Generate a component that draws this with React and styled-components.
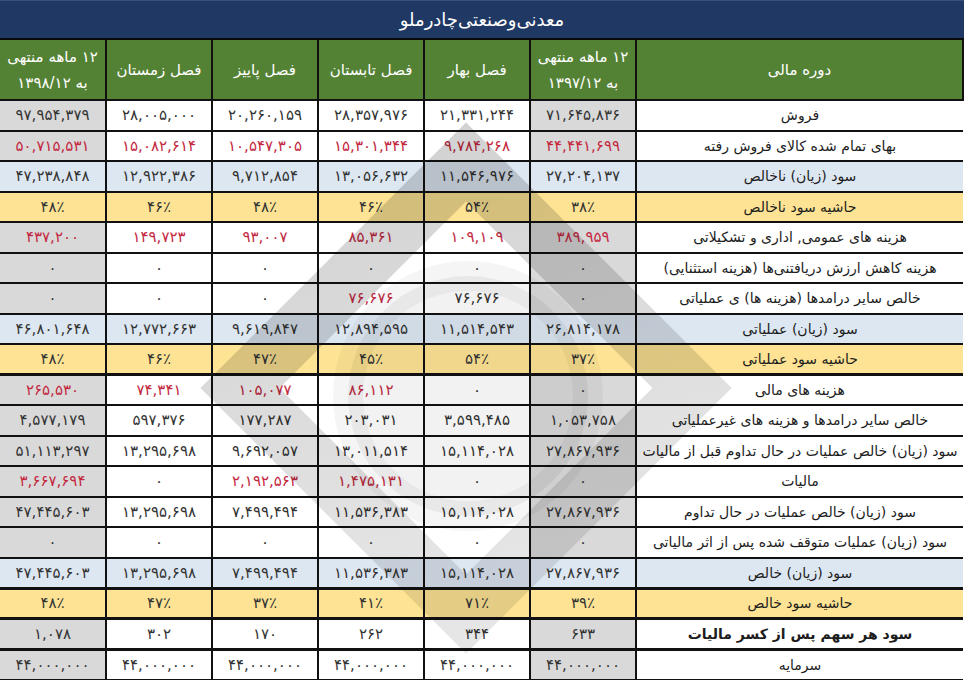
import styled, { createGlobalStyle } from 'styled-components';

const GlobalStyle = createGlobalStyle`
  html, body {
    margin: 0;
    padding: 0;
    background: #fff;
  }
  body {
    width: 964px;
    height: 680px;
    overflow: hidden;
    font-family: "DejaVu Sans", "Noto Sans", sans-serif;
  }
`;

const fa = (s) => String(s).replace(/\d/g, (d) => '۰۱۲۳۴۵۶۷۸۹'[d]);

const TONES = {
  white: '#ffffff',
  grey: '#d9d9d9',
  blue: '#dde7f2',
  yellow: '#fde393',
};

const Sheet = styled.div`
  position: relative;
  width: 964px;
  direction: rtl;
`;

const TitleBar = styled.div`
  height: 40px;
  box-sizing: border-box;
  background: #1f3864;
  color: #fff;
  display: flex;
  align-items: center;
  justify-content: center;
  font-size: 18px;
  border-top: 1px solid #3a4f7a;
  border-bottom: 2px solid #0a0a0a;
`;

const Table = styled.table`
  width: 964px;
  border-collapse: collapse;
  table-layout: fixed;
`;

const HeadCell = styled.th`
  background: #548235;
  color: #fff;
  font-weight: normal;
  font-size: 15px;
  line-height: 26px;
  height: 59px;
  padding: 0;
  border: 2px solid #111;
  border-top: 0;
`;

const Row = styled.tr`
  height: 30.5px;
`;

const LabelCell = styled.td`
  background: ${(p) => TONES[p.$tone]};
  color: #1c1c1c;
  font-size: 14px;
  font-weight: ${(p) => (p.$bold ? 700 : 400)};
  text-align: center;
  white-space: nowrap;
  padding: 0 4px;
  border: 2px solid #111;
  border-bottom-width: ${(p) => (p.$thick ? 3 : 2)}px;
  border-right: 0;
`;

const NumCell = styled.td`
  background: ${(p) => TONES[p.$tone]};
  color: ${(p) => (p.$red ? '#c4283f' : '#333')};
  font-size: 15px;
  letter-spacing: 0.6px;
  text-align: center;
  white-space: nowrap;
  padding: 0;
  border: 2px solid #111;
  border-bottom-width: ${(p) => (p.$thick ? 3 : 2)}px;
`;

const Watermark = styled.svg`
  position: absolute;
  top: 0;
  left: 0;
  width: 964px;
  height: 680px;
  pointer-events: none;
`;

const columns = [
  { label: 'دوره مالی', width: 327 },
  { label: ['۱۲ ماهه منتهی', 'به ۱۳۹۷/۱۲'], width: 106 },
  { label: 'فصل بهار', width: 106 },
  { label: 'فصل تابستان', width: 106 },
  { label: 'فصل پاییز', width: 106 },
  { label: 'فصل زمستان', width: 106 },
  { label: ['۱۲ ماهه منتهی', 'به ۱۳۹۸/۱۲'], width: 107 },
];

const ALL = [0, 1, 2, 3, 4, 5];

const rows = [
  { label: 'فروش', tone: 'white', values: ['71,645,836', '21,331,244', '28,357,976', '20,260,159', '28,005,000', '97,954,379'] },
  { label: 'بهای تمام شده کالای فروش رفته', tone: 'white', red: ALL, values: ['44,441,699', '9,784,268', '15,301,344', '10,547,305', '15,082,614', '50,715,531'] },
  { label: 'سود (زیان) ناخالص', tone: 'blue', values: ['27,204,137', '11,546,976', '13,056,632', '9,712,854', '12,922,386', '47,238,848'] },
  { label: 'حاشیه سود ناخالص', tone: 'yellow', values: ['38٪', '54٪', '46٪', '48٪', '46٪', '48٪'] },
  { label: 'هزینه های عمومی, اداری و تشکیلاتی', tone: 'white', red: ALL, values: ['389,959', '109,109', '85,361', '93,007', '149,723', '437,200'] },
  { label: 'هزینه کاهش ارزش دریافتنی‌ها (هزینه استثنایی)', tone: 'white', values: ['0', '0', '0', '0', '0', '0'] },
  { label: 'خالص سایر درامدها (هزینه ها) ی عملیاتی', tone: 'white', red: [2], values: ['0', '76,676', '76,676', '0', '0', '0'] },
  { label: 'سود (زیان) عملیاتی', tone: 'blue', values: ['26,814,178', '11,514,543', '12,894,595', '9,619,847', '12,772,663', '46,801,648'] },
  { label: 'حاشیه سود عملیاتی', tone: 'yellow', thick: true, values: ['37٪', '54٪', '45٪', '47٪', '46٪', '48٪'] },
  { label: 'هزینه های مالی', tone: 'white', red: [2, 3, 4, 5], values: ['0', '0', '86,112', '105,077', '74,341', '265,530'] },
  { label: 'خالص سایر درامدها و هزینه های غیرعملیاتی', tone: 'white', values: ['1,053,758', '3,599,485', '203,031', '177,287', '597,376', '4,577,179'] },
  { label: 'سود (زیان) خالص عملیات در حال تداوم قبل از مالیات', tone: 'white', values: ['27,867,936', '15,114,028', '13,011,514', '9,692,057', '13,295,698', '51,113,297'] },
  { label: 'مالیات', tone: 'white', red: [2, 3, 5], values: ['0', '0', '1,475,131', '2,192,563', '0', '3,667,694'] },
  { label: 'سود (زیان) خالص عملیات در حال تداوم', tone: 'white', values: ['27,867,936', '15,114,028', '11,536,383', '7,499,494', '13,295,698', '47,445,603'] },
  { label: 'سود (زیان) عملیات متوقف شده پس از اثر مالیاتی', tone: 'white', values: ['0', '0', '0', '0', '0', '0'] },
  { label: 'سود (زیان) خالص', tone: 'blue', thick: true, values: ['27,867,936', '15,114,028', '11,536,383', '7,499,494', '13,295,698', '47,445,603'] },
  { label: 'حاشیه سود خالص', tone: 'yellow', thick: true, values: ['39٪', '71٪', '41٪', '37٪', '47٪', '48٪'] },
  { label: 'سود هر سهم پس از کسر مالیات', tone: 'white', bold: true, thick: true, values: ['633', '344', '262', '170', '302', '1,078'] },
  { label: 'سرمایه', tone: 'white', values: ['44,000,000', '44,000,000', '44,000,000', '44,000,000', '44,000,000', '44,000,000'] },
];

const cellTone = (rowTone, i) => (rowTone === 'white' && (i === 0 || i === 5) ? 'grey' : rowTone);

// faint diamond + disc logo printed over the sheet
function Logo() {
  return (
    <Watermark viewBox="0 0 964 680">
      <defs>
        <linearGradient id="wmArm" x1="0" y1="0" x2="0.3" y2="1">
          <stop offset="0" stopColor="#000" stopOpacity="0.18" />
          <stop offset="1" stopColor="#000" stopOpacity="0.1" />
        </linearGradient>
      </defs>
      <circle cx="468" cy="396" r="120" fill="#000" fillOpacity="0.05" />
      <circle cx="468" cy="396" r="120" fill="none" stroke="#000" strokeOpacity="0.04" strokeWidth="30" />
      <path
        d="M 466 162 L 692 388 L 466 614 L 240 388 Z"
        fill="none"
        stroke="url(#wmArm)"
        strokeWidth="56"
        strokeLinejoin="miter"
      />
    </Watermark>
  );
}

export default function App() {
  return (
    <>
      <GlobalStyle />
      <Sheet>
        <TitleBar>معدنی‌وصنعتی‌چادرملو</TitleBar>
        <Table>
          <colgroup>
            {columns.map((c, i) => (
              <col key={i} style={{ width: c.width }} />
            ))}
          </colgroup>
          <thead>
            <tr>
              {columns.map((c, i) => (
                <HeadCell key={i}>
                  {Array.isArray(c.label) ? (
                    <>
                      {c.label[0]}
                      <br />
                      {c.label[1]}
                    </>
                  ) : (
                    c.label
                  )}
                </HeadCell>
              ))}
            </tr>
          </thead>
          <tbody>
            {rows.map((r, ri) => (
              <Row key={ri}>
                <LabelCell $tone={r.tone} $bold={r.bold} $thick={r.thick}>
                  {r.label}
                </LabelCell>
                {r.values.map((v, i) => (
                  <NumCell
                    key={i}
                    $tone={cellTone(r.tone, i)}
                    $red={r.red && r.red.includes(i)}
                    $thick={r.thick}
                  >
                    {fa(v)}
                  </NumCell>
                ))}
              </Row>
            ))}
          </tbody>
        </Table>
        <Logo />
      </Sheet>
    </>
  );
}
